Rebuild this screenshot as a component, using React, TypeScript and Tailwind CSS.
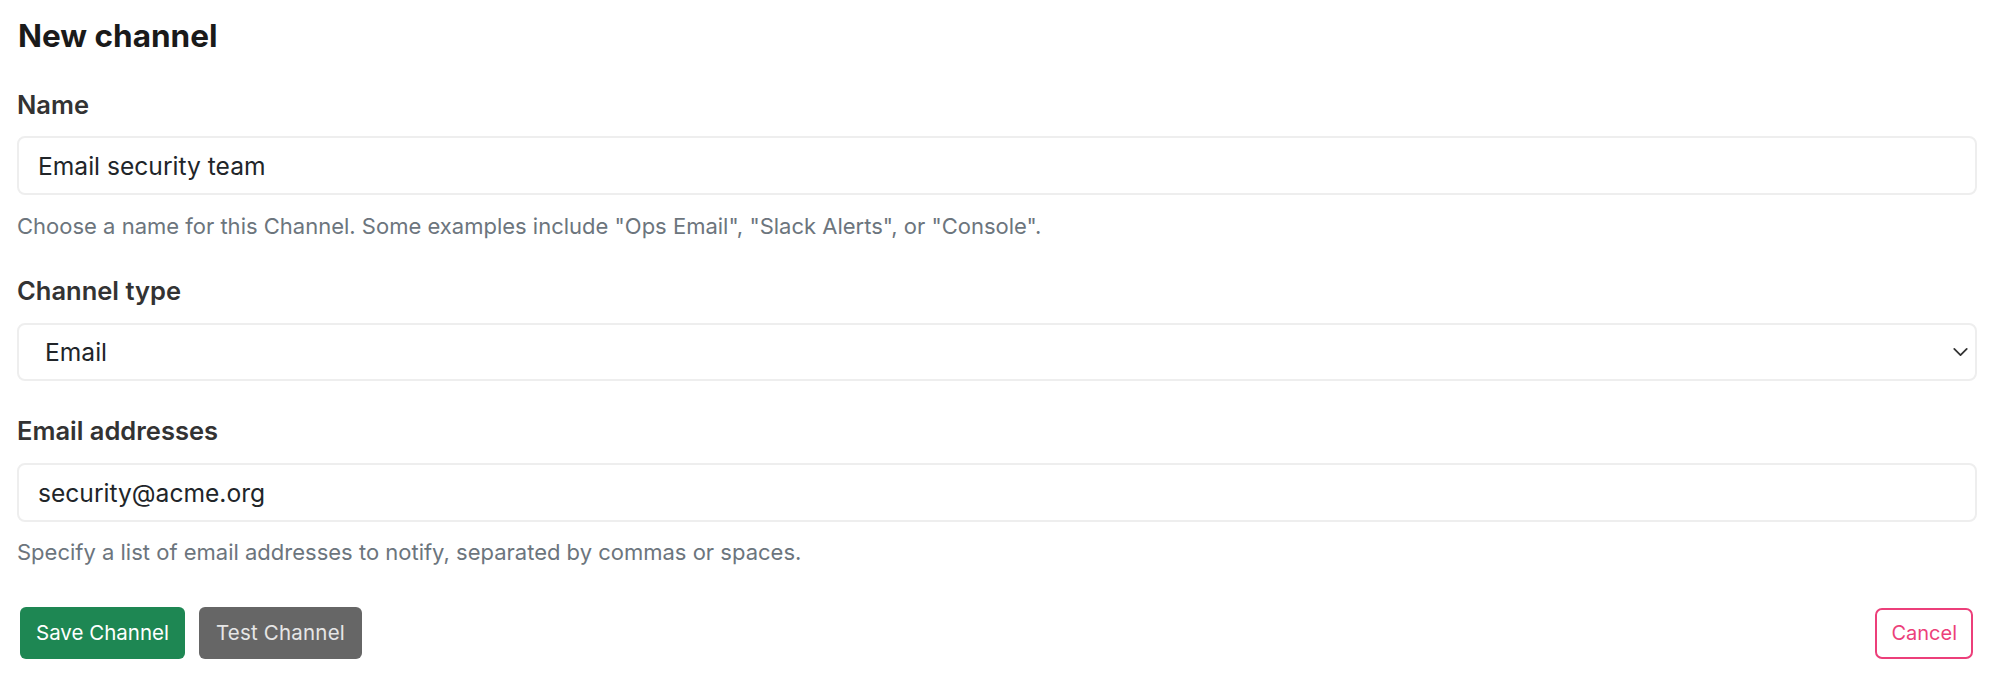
import { ChevronDown } from "lucide-react";

const font = { fontFamily: "Inter, 'Noto Sans', sans-serif" };

const Label = ({ children }: { children: React.ReactNode }) => (
  <label className="block text-[25.5px] leading-[30px] font-semibold text-[#333333]">{children}</label>
);

const Help = ({ children }: { children: React.ReactNode }) => (
  <p className="text-[22px] leading-[26px] text-[#6c757d]">{children}</p>
);

export default function App() {
  return (
    <div style={font} className="w-full bg-white pl-[17px] pr-[22px] pt-[16px] pb-[30px]">
      <h1 className="text-[31.5px] leading-[40px] font-bold text-[#1a1a1a] pl-[1px]">New channel</h1>

      {/* Name */}
      <div className="mt-[34px]">
        <Label>Name</Label>
        <input
          defaultValue="Email security team"
          className="mt-[16px] block w-full h-[59px] rounded-[8px] border-2 border-[#eeeeee] bg-white px-[19px] text-[24.6px] text-[#212529] outline-none"
        />
        <div className="mt-[18px]">
          <Help>Choose a name for this Channel. Some examples include "Ops Email", "Slack Alerts", or "Console".</Help>
        </div>
      </div>

      {/* Channel type */}
      <div className="mt-[37px]">
        <Label>Channel type</Label>
        <div className="relative mt-[17px]">
          <select
            defaultValue="email"
            className="block w-full h-[58px] appearance-none rounded-[8px] border-2 border-[#eeeeee] bg-white pl-[26px] text-[24.6px] text-[#212529] outline-none"
          >
            <option value="email">Email</option>
            <option value="slack">Slack</option>
            <option value="webhook">Webhook</option>
          </select>
          <ChevronDown
            className="pointer-events-none absolute right-[4px] top-1/2 -translate-y-1/2 text-[#333]"
            size={25}
            strokeWidth={1.7}
          />
        </div>
      </div>

      {/* Email addresses */}
      <div className="mt-[35px]">
        <Label>Email addresses</Label>
        <input
          defaultValue="security@acme.org"
          className="mt-[17px] block w-full h-[59px] rounded-[8px] border-2 border-[#eeeeee] bg-white px-[19px] text-[24.6px] text-[#212529] outline-none"
        />
        <div className="mt-[17px]">
          <Help>Specify a list of email addresses to notify, separated by commas or spaces.</Help>
        </div>
      </div>

      {/* Actions */}
      <div className="mt-[42px] flex items-center">
        <button className="ml-[3px] h-[52px] rounded-[6px] bg-[#1e8753] px-[16px] text-[20.5px] text-white">
          Save Channel
        </button>
        <button className="ml-[14px] h-[52px] rounded-[6px] bg-[#666666] px-[17px] text-[20.5px] tracking-[0.2px] text-[#e6e6e6]">
          Test Channel
        </button>
        <button className="ml-auto mr-[4px] h-[51px] rounded-[7px] border-2 border-[#ec3f7a] bg-white px-[14px] text-[20px] text-[#ec3f7a]">
          Cancel
        </button>
      </div>
    </div>
  );
}
